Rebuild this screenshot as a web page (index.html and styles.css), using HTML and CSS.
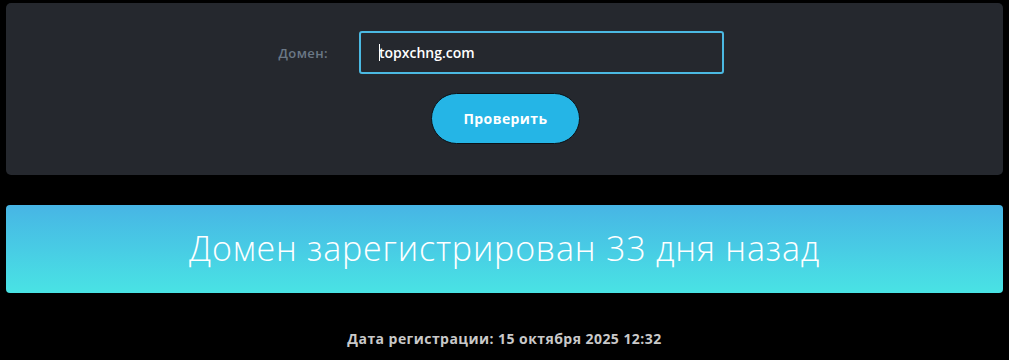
FILE: index.html
```html
<!DOCTYPE html>
<html lang="ru">
<head>
<meta charset="utf-8">
<title>Проверка домена</title>
<link rel="stylesheet" href="styles.css">
</head>
<body>
<div class="page">
  <section class="panel">
    <form class="form">
      <div class="row">
        <label class="label" for="domain">Домен:</label>
        <div class="input"><span class="caret"></span>topxchng.com</div>
      </div>
      <button type="button" class="btn">Проверить</button>
    </form>
  </section>
  <div class="banner">Домен зарегистрирован 33 дня назад</div>
  <p class="date">Дата регистрации: 15 октября 2025 12:32</p>
</div>
</body>
</html>
```

FILE: styles.css
```css
html, body {
  margin: 0;
  padding: 0;
  background: #000;
}
body {
  font-family: "Open Sans", "Liberation Sans", sans-serif;
  color: #fff;
}
.page {
  padding: 3px 6px 0 6px;
}
.panel {
  background: #25282e;
  border-radius: 5px;
  height: 172px;
  box-sizing: border-box;
  padding-top: 28px;
}
.form {
  display: flex;
  flex-direction: column;
  align-items: center;
}
.row {
  display: flex;
  align-items: center;
  gap: 31px;
  padding-right: 8px;
}
.label {
  width: 51px;
  white-space: nowrap;
  text-align: right;
  font-size: 13px;
  font-weight: 600;
  letter-spacing: 0.4px;
  color: #6b7886;
}
.input {
  width: 365px;
  height: 43px;
  box-sizing: border-box;
  border: 2px solid #4bb9e2;
  border-radius: 3px;
  padding-left: 18px;
  display: flex;
  align-items: center;
  font-size: 14px;
  font-weight: 600;
  color: #fff;
}
.caret {
  display: inline-block;
  width: 1px;
  height: 17px;
  background: #fff;
  margin-right: -1px;
}
.btn {
  margin-top: 19px;
  width: 149px;
  height: 51px;
  border-radius: 26px;
  border: 1px solid #0b1217;
  background: #25b5e6;
  color: #fff;
  font-family: inherit;
  font-size: 14px;
  font-weight: 700;
  letter-spacing: 0.4px;
  cursor: pointer;
  margin-left: 2px;
}
.banner {
  margin-top: 30px;
  height: 88px;
  border-radius: 4px;
  background: linear-gradient(180deg, #47b5e5 0%, #49e3e4 100%);
  display: flex;
  align-items: center;
  justify-content: center;
  font-size: 34px;
  font-weight: 300;
  letter-spacing: 0.8px;
  color: #fff;
  padding-bottom: 2px;
  box-sizing: border-box;
}
.date {
  margin: 36px 0 0 0;
  text-align: center;
  font-size: 14px;
  font-weight: 700;
  letter-spacing: 0.45px;
  color: #c9c9c9;
}
```
